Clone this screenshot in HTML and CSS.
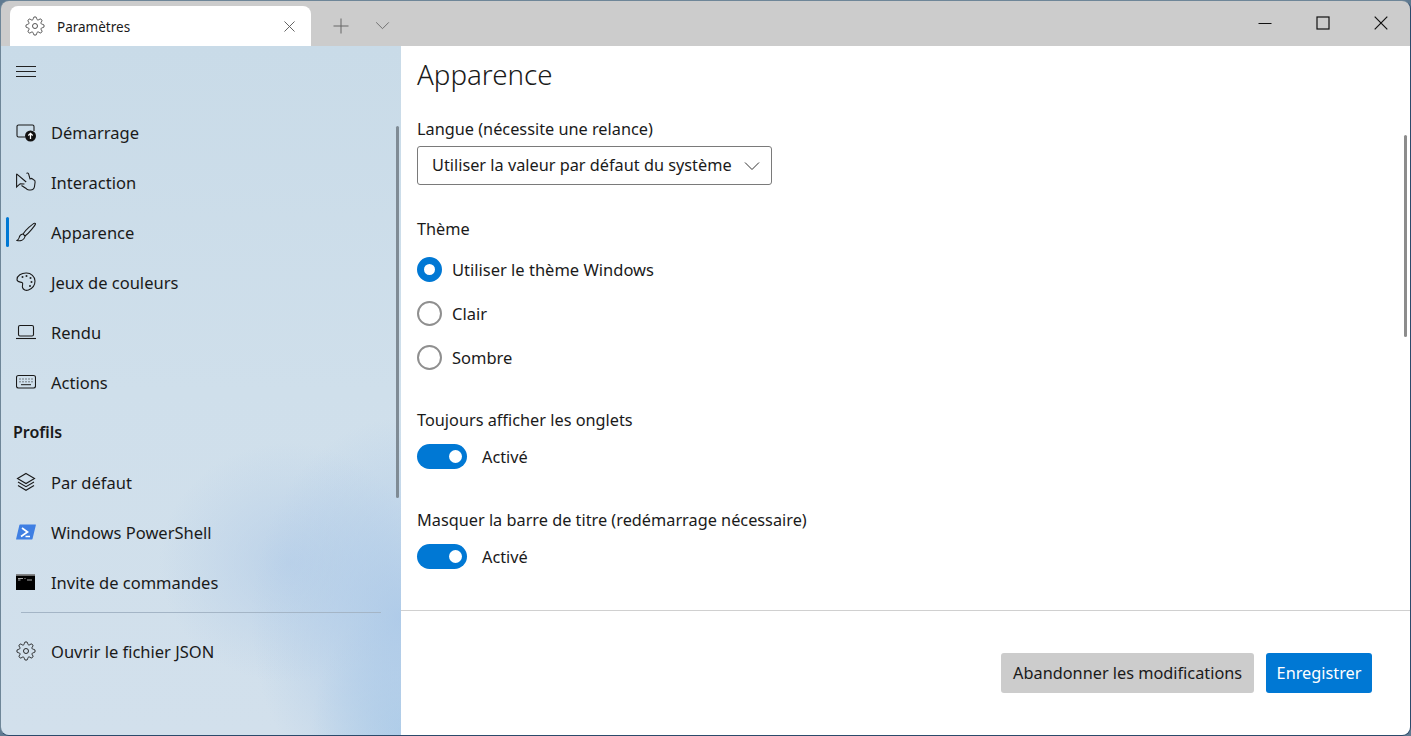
FILE: index.html
```html
<!DOCTYPE html>
<html lang="fr">
<head>
  <meta charset="UTF-8" />
  <title>Paramètres</title>
  <link rel="stylesheet" href="styles.css">
</head>
<body>
  <svg class="defs" width="0" height="0">
    <symbol id="gear" viewBox="0 0 24 24">
      <circle cx="12" cy="12" r="3"/>
      <path d="M19.4 15a1.65 1.65 0 0 0 .33 1.82l.06.06a2 2 0 0 1 0 2.83 2 2 0 0 1-2.83 0l-.06-.06a1.65 1.65 0 0 0-1.82-.33 1.65 1.65 0 0 0-1 1.51V21a2 2 0 0 1-2 2 2 2 0 0 1-2-2v-.09A1.65 1.65 0 0 0 9 19.4a1.65 1.65 0 0 0-1.82.33l-.06.06a2 2 0 0 1-2.83 0 2 2 0 0 1 0-2.83l.06-.06a1.65 1.65 0 0 0 .33-1.82 1.65 1.65 0 0 0-1.51-1H3a2 2 0 0 1-2-2 2 2 0 0 1 2-2h.09A1.65 1.65 0 0 0 4.6 9a1.65 1.65 0 0 0-.33-1.82l-.06-.06a2 2 0 0 1 0-2.83 2 2 0 0 1 2.83 0l.06.06a1.65 1.65 0 0 0 1.82.33H9a1.65 1.65 0 0 0 1-1.51V3a2 2 0 0 1 2-2 2 2 0 0 1 2 2v.09a1.65 1.65 0 0 0 1 1.51 1.65 1.65 0 0 0 1.82-.33l.06-.06a2 2 0 0 1 2.83 0 2 2 0 0 1 0 2.83l-.06.06a1.65 1.65 0 0 0-.33 1.82V9a1.65 1.65 0 0 0 1.51 1H21a2 2 0 0 1 2 2 2 2 0 0 1-2 2h-.09a1.65 1.65 0 0 0-1.51 1z"/>
    </symbol>
  </svg>

  <div class="window">
    <header class="titlebar">
      <div class="tab">
        <svg class="icon tab-gear"><use href="#gear"/></svg>
        <span class="tab-title">Paramètres</span>
        <svg class="tab-close" viewBox="0 0 12 12"><path d="M.5.5l11 11M11.500.5l-11 11"/></svg>
      </div>
      <svg class="tab-plus" viewBox="0 0 16 16"><path d="M8 .5v15M.5 8h15"/></svg>
      <svg class="tab-more" viewBox="0 0 16 10"><path d="M1 1.500l7 7 7-7"/></svg>
      <div class="caption">
        <svg class="cap-btn" viewBox="0 0 14 14"><path d="M.5 7.500h13"/></svg>
        <svg class="cap-btn" viewBox="0 0 14 14"><rect x="1" y="1" width="12" height="12"/></svg>
        <svg class="cap-btn" viewBox="0 0 14 14"><path d="M.7.7l12.600 12.600M13.300.7L.7 13.300"/></svg>
      </div>
    </header>

    <div class="body">
      <aside class="sidebar">
        <button class="hamburger"><span></span><span></span><span></span></button>

        <nav class="nav">
          <a class="nav-item">
            <svg class="icon" viewBox="0 0 20 20">
              <path d="M9 15H2.500A1.500 1.500 0 0 1 1 13.500v-9A1.500 1.500 0 0 1 2.500 3h14A1.500 1.500 0 0 1 18 4.500V9"/>
              <circle class="solid" cx="14.500" cy="14" r="5.500"/>
              <path class="knock" d="M14.500 17v-5.500M12.300 13.500l2.200-2.200 2.200 2.200"/>
            </svg>
            <span>Démarrage</span>
          </a>
          <a class="nav-item">
            <svg class="icon" viewBox="0 0 20 20">
              <path d="M.6 1.800V15l3.600-3.300 4.300.3M.6 1.800l9.600 8.200"/>
              <path d="M10.500 1.500c.6-.8 1.800-.5 2.100.4l1.400 5 1.600-.5 2 1.400c1 .3 1.600 1.100 1.500 2.200l-.6 4.500c-.3 2-2 3.500-4 3.500h-1.500c-1.400 0-2.500-.8-3.300-1.800L5.500 13.500"/>
            </svg>
            <span>Interaction</span>
          </a>
          <a class="nav-item active">
            <svg class="icon" viewBox="0 0 20 20">
              <path d="M18.500 1.200c-1.500.3-9 6.800-11.500 10.800l2 2c3.800-2.700 10-10.500 10.500-12 .1-.6-.4-.9-1-.8z"/>
              <path d="M6.800 12c-2.300.3-3.300 1.800-3.600 3.500-.2 1.200-1 2.200-2.200 3 3.200.8 7-.2 8.200-4.400"/>
            </svg>
            <span>Apparence</span>
          </a>
          <a class="nav-item">
            <svg class="icon" viewBox="0 0 20 20">
              <path d="M10 1C5.500 1 1 3.500 1 7.500c0 3 3.500 2.300 5 3 1.800.9-.2 3 .5 5 .7 2.500 3.500 3.500 6 2.500 3.800-1.500 6.500-5 6.500-9 0-4.500-4-8-8.500-8z"/>
              <circle class="dot" cx="6.500" cy="5" r="1"/><circle class="dot" cx="10.500" cy="4" r="1"/><circle class="dot" cx="14.500" cy="6" r="1"/><circle class="dot" cx="15.500" cy="10" r="1"/><circle class="dot" cx="14" cy="14" r="1"/>
            </svg>
            <span>Jeux de couleurs</span>
          </a>
          <a class="nav-item">
            <svg class="icon" viewBox="0 0 20 20">
              <rect x="2.500" y="3.500" width="15" height="10.500" rx="1.500"/>
              <path d="M0 16.500h20"/>
            </svg>
            <span>Rendu</span>
          </a>
          <a class="nav-item">
            <svg class="icon" viewBox="0 0 20 20">
              <rect x="0.500" y="3.500" width="19" height="12.500" rx="2"/>
              <path class="thin" d="M3.500 7h1M6.500 7h1M9.500 7h1M12.500 7h1M15.500 7h1M3.500 9.800h1M6.500 9.800h1M9.500 9.800h1M12.500 9.800h1M15.500 9.800h1M5 12.700h10"/>
            </svg>
            <span>Actions</span>
          </a>
          <div class="nav-header">Profils</div>
          <a class="nav-item">
            <svg class="icon" viewBox="0 0 20 20">
              <path d="M10 1.500l8.500 5-8.500 5-8.500-5z"/>
              <path d="M2 10l8 4.700 8-4.700M2 13.500l8 4.800 8-4.800"/>
            </svg>
            <span>Par défaut</span>
          </a>
          <a class="nav-item">
            <svg class="icon ps" viewBox="0 0 20 20">
              <path d="M4 2.500h15.500a.4.4 0 0 1 .4.5L16.500 17a.7.7 0 0 1-.6.5H.5a.4.4 0 0 1-.4-.5L3.400 3a.7.7 0 0 1 .6-.5z"/>
              <path class="ps-mark" d="M6 6l5.500 4L5 14.500M9.500 14.500h4.500"/>
            </svg>
            <span>Windows PowerShell</span>
          </a>
          <a class="nav-item">
            <svg class="icon cmd" viewBox="0 0 20 20">
              <rect x="0" y="2.500" width="19" height="15.500"/>
              <rect class="cmd-bar" x="0" y="2.500" width="19" height="1.200"/>
              <path class="cmd-text" d="M2 6.500h5M2 8h2.500M8.500 6.500h1M11 8h5"/>
            </svg>
            <span>Invite de commandes</span>
          </a>
        </nav>

        <div class="nav-rule"></div>
        <a class="nav-item">
          <svg class="icon"><use href="#gear"/></svg>
          <span>Ouvrir le fichier JSON</span>
        </a>
        <div class="scrollbar side-scroll"></div>
      </aside>

      <main class="main">
        <div class="content">
          <h1>Apparence</h1>

          <section class="field lang">
            <label class="field-label">Langue (nécessite une relance)</label>
            <div class="dropdown">
              <span>Utiliser la valeur par défaut du système</span>
              <svg viewBox="0 0 16 10"><path d="M1 1.500l7 7 7-7"/></svg>
            </div>
          </section>

          <section class="field theme">
            <label class="field-label">Thème</label>
            <div class="radio checked"><i></i><span>Utiliser le thème Windows</span></div>
            <div class="radio"><i></i><span>Clair</span></div>
            <div class="radio"><i></i><span>Sombre</span></div>
          </section>

          <section class="field tabs">
            <label class="field-label">Toujours afficher les onglets</label>
            <div class="toggle"><i></i><span>Activé</span></div>
          </section>

          <section class="field bar">
            <label class="field-label">Masquer la barre de titre (redémarrage nécessaire)</label>
            <div class="toggle"><i></i><span>Activé</span></div>
          </section>
          <div class="scrollbar main-scroll"></div>
        </div>

        <footer class="actions">
          <button class="btn">Abandonner les modifications</button>
          <button class="btn primary">Enregistrer</button>
        </footer>
      </main>
    </div>
  </div>
</body>
</html>
```

FILE: styles.css
```css
:root {
  --accent: #0078d4;
  --text: #1a1a1a;
  --chrome: #cccccc;
}
* { box-sizing: border-box; }
html, body { height: 100%; }
body {
  margin: 0;
  background: #5f7a91;
  font-family: "Noto Sans", "Open Sans", sans-serif;
  font-size: 16.3px;
  color: var(--text);
  overflow: hidden;
}
.defs { position: absolute; }

.window {
  height: 100vh;
  display: flex;
  flex-direction: column;
  border-radius: 9px;
  overflow: hidden;
  border: 1px solid #6e8698;
  border-right-color: #2c4a6b;
  border-bottom-color: #2c4a6b;
}

/* title bar */
.titlebar {
  height: 45px;
  flex: none;
  display: flex;
  align-items: flex-end;
  padding-left: 9px;
  background: var(--chrome);
}
.tab {
  width: 301px;
  height: 40px;
  display: flex;
  align-items: center;
  padding: 0 16px 0 15px;
  background: #fff;
  border-radius: 8px 8px 0 0;
}
.tab-gear { width: 20px; height: 20px; stroke-width: 1.2; color: #444; }
.tab-title { margin-left: 12px; padding-top: 2px; font-size: 13.500px; flex: 1; }
.tab-close { width: 11px; height: 11px; stroke: #555; fill: none; }
.tab-plus {
  width: 16px; height: 16px;
  margin: 0 0 12px 22px;
  stroke: #666; fill: none; stroke-width: 1;
}
.tab-more {
  width: 15px; height: 9px;
  margin: 0 0 16px 26px;
  stroke: #666; fill: none; stroke-width: 1;
}
.caption {
  margin-left: auto;
  align-self: flex-start;
  display: flex;
  gap: 44px;
  padding: 15px 22px 0 0;
}
.cap-btn { width: 14px; height: 14px; stroke: #111; fill: none; stroke-width: 1.2; }

/* layout */
.body { flex: 1; display: flex; min-height: 0; }

.sidebar {
  position: relative;
  width: 400px;
  flex: none;
  font-size: 16.500px;
  background:
    radial-gradient(ellipse 150px 200px at 100% 83%, rgba(170, 200, 232, .85), rgba(170, 200, 232, 0)),
    radial-gradient(ellipse 130px 120px at 72% 75%, rgba(180, 205, 232, .7), rgba(180, 205, 232, 0)),
    radial-gradient(ellipse 90px 130px at 100% 100%, rgba(170, 203, 232, .8), rgba(170, 203, 232, 0)),
    linear-gradient(180deg, #c9dbe8 0%, #cfdfeb 50%, #d2e0ec 100%);
}
.hamburger {
  display: flex;
  flex-direction: column;
  gap: 4px;
  margin: 20px 0 0 15px;
  padding: 0;
  width: 20px;
  border: 0;
  background: none;
}
.hamburger span { height: 1px; background: #222; }

.nav { margin-top: 30px; }
.nav-item {
  position: relative;
  height: 50px;
  display: flex;
  align-items: center;
  gap: 15px;
  padding-left: 15px;
}
.nav-item.active::before {
  content: "";
  position: absolute;
  left: 5px;
  top: 10px;
  width: 3px;
  height: 30px;
  border-radius: 2px;
  background: var(--accent);
}
.nav-header {
  height: 50px;
  line-height: 50px;
  padding-left: 12px;
  font-weight: 600;
  font-size: 16px;
}
.nav-rule {
  height: 1px;
  margin: 5px 20px 13px;
  background: #a4b5c6;
}
.icon {
  width: 20px;
  height: 20px;
  flex: none;
  fill: none;
  stroke: currentColor;
  stroke-width: 1.1;
}
.icon .solid { fill: #111; stroke: none; }
.icon .knock { stroke: #fff; stroke-width: 1.300; }
.icon .dot { fill: #222; stroke: none; }
.icon .thin { stroke-width: 1; }
.icon.ps, .icon.cmd { stroke: none; }
.icon.ps path { fill: #3f7fe3; }
.icon.ps .ps-mark { fill: none; stroke: #fff; stroke-width: 1.700; }
.icon.cmd rect { fill: #000; }
.icon.cmd .cmd-bar { fill: #9a9a9a; }
.icon.cmd .cmd-text { stroke: #bbb; stroke-width: .9; }

.scrollbar {
  position: absolute;
  width: 3px;
  border-radius: 2px;
}
.side-scroll { left: 395px; top: 80px; height: 372px; background: #7f8b95; }
.main-scroll { right: 3px; top: 89px; height: 202px; background: #8c8c8c; }

/* main */
.main {
  flex: 1;
  min-width: 0;
  display: flex;
  flex-direction: column;
  background: #fff;
}
.content {
  position: relative;
  height: 565px;
  padding: 0 16px;
  border-bottom: 1px solid #d0d0d0;
}
h1 {
  margin: 9px 0 0;
  font-size: 27.700px;
  font-weight: 300;
  line-height: 38px;
}
.field { display: flex; flex-direction: column; align-items: flex-start; }
.field-label { line-height: 24px; }
.lang { margin-top: 24px; }
.theme { margin-top: 32px; }
.tabs { margin-top: 29px; }
.bar { margin-top: 39px; }

.dropdown {
  width: 355px;
  height: 39px;
  margin-top: 5px;
  padding: 0 11px 0 14px;
  display: flex;
  align-items: center;
  justify-content: space-between;
  border: 1px solid #7a7a7a;
  border-radius: 3px;
}
.dropdown span { position: relative; top: -1px; }
.dropdown svg { width: 16px; height: 10px; fill: none; stroke: #333; stroke-width: 1; }

.radio {
  height: 44px;
  display: flex;
  align-items: center;
  gap: 10px;
  font-size: 16.500px;
}
.theme .field-label { margin-bottom: 6px; }
.radio i {
  width: 25px;
  height: 25px;
  border-radius: 50%;
  border: 2px solid #8f8f8f;
}
.radio.checked i { border: 7px solid var(--accent); background: #fff; }

.toggle {
  height: 25px;
  margin-top: 12px;
  display: flex;
  align-items: center;
  gap: 15px;
}
.toggle i {
  position: relative;
  width: 50px;
  height: 25px;
  border-radius: 13px;
  background: var(--accent);
}
.toggle i::after {
  content: "";
  position: absolute;
  right: 5px;
  top: 6px;
  width: 13px;
  height: 13px;
  border-radius: 50%;
  background: #fff;
}

.actions {
  flex: 1;
  display: flex;
  justify-content: flex-end;
  gap: 12px;
  padding: 42px 38px 0 0;
}
.btn {
  height: 40px;
  padding: 0 12px;
  border: 0;
  border-radius: 3px;
  background: var(--chrome);
  color: var(--text);
  font: inherit;
}
.btn.primary { padding: 0 10.500px; background: var(--accent); color: #fff; }
```
